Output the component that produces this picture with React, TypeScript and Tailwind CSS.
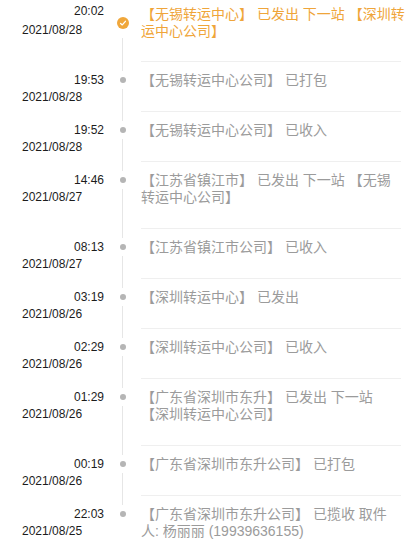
import React from 'react';

type Item = {
  time: string;
  date: string;
  lines: string[];
  active?: boolean;
};

const items: Item[] = [
  { time: '20:02', date: '2021/08/28', lines: ['【无锡转运中心】 已发出 下一站 【深圳转', '运中心公司】'], active: true },
  { time: '19:53', date: '2021/08/28', lines: ['【无锡转运中心公司】 已打包'] },
  { time: '19:52', date: '2021/08/28', lines: ['【无锡转运中心公司】 已收入'] },
  { time: '14:46', date: '2021/08/27', lines: ['【江苏省镇江市】 已发出 下一站 【无锡', '转运中心公司】'] },
  { time: '08:13', date: '2021/08/27', lines: ['【江苏省镇江市公司】 已收入'] },
  { time: '03:19', date: '2021/08/26', lines: ['【深圳转运中心】 已发出'] },
  { time: '02:29', date: '2021/08/26', lines: ['【深圳转运中心公司】 已收入'] },
  { time: '01:29', date: '2021/08/26', lines: ['【广东省深圳市东升】 已发出 下一站', '【深圳转运中心公司】'] },
  { time: '00:19', date: '2021/08/26', lines: ['【广东省深圳市东升公司】 已打包'] },
  { time: '22:03', date: '2021/08/25', lines: ['【广东省深圳市东升公司】 已揽收 取件', '人: 杨丽丽 (19939636155)'] },
];

const CheckDot = () => (
  <svg width="12" height="12" viewBox="0 0 12 12">
    <circle cx="6" cy="6" r="6" fill="#F0A73B" />
    <path d="M3.6 6.4 L5.3 7.9 L8.4 4.3" stroke="#fff" strokeWidth="1.3" fill="none" strokeLinecap="round" strokeLinejoin="round" />
  </svg>
);

const Row = ({ item, first, last }: { item: Item; first: boolean; last: boolean }) => {
  return (
    <div className="flex">
      {/* 时间 */}
      <div className={`w-[82px] shrink-0 text-[12px] leading-[17px] text-[#1c1c1c] ${first ? 'pt-[3px]' : 'pt-[10px]'}`}>
        <div className="text-right">{item.time}</div>
        <div className={first ? 'mt-[2px]' : ''}>{item.date}</div>
      </div>

      {/* 轴 */}
      <div className="w-[37px] shrink-0 flex flex-col items-center">
        {first ? (
          <div className="mt-[17px]">
            <CheckDot />
          </div>
        ) : (
          <>
            <div className="w-px h-[9px] bg-[#e6e6e6]" />
            <div className="mt-[6px] w-[6px] h-[6px] rounded-full bg-[#b5b5b5]" />
          </>
        )}
        {!last && <div className={`w-px flex-1 bg-[#e6e6e6] ${first ? 'mt-[9px]' : 'mt-[6px]'}`} />}
      </div>

      {/* 内容 */}
      <div
        className={`w-[260px] shrink-0 border-b border-[#efefef] text-[14px] leading-[17px] whitespace-nowrap ${
          item.active ? 'text-[#EFA53A]' : 'text-[#9b9b9b]'
        } ${first ? 'pt-[6px] pb-[21px]' : 'pt-[10px] pb-[22px]'}`}
      >
        {item.lines.map((l, i) => (
          <div key={i}>{l}</div>
        ))}
      </div>
    </div>
  );
};

export default function App() {
  return (
    <div className="min-h-screen bg-white pl-[22px] font-['Liberation_Sans','Noto_Sans_CJK_SC',sans-serif]">
      {items.map((item, i) => (
        <Row key={i} item={item} first={i === 0} last={i === items.length - 1} />
      ))}
    </div>
  );
}
